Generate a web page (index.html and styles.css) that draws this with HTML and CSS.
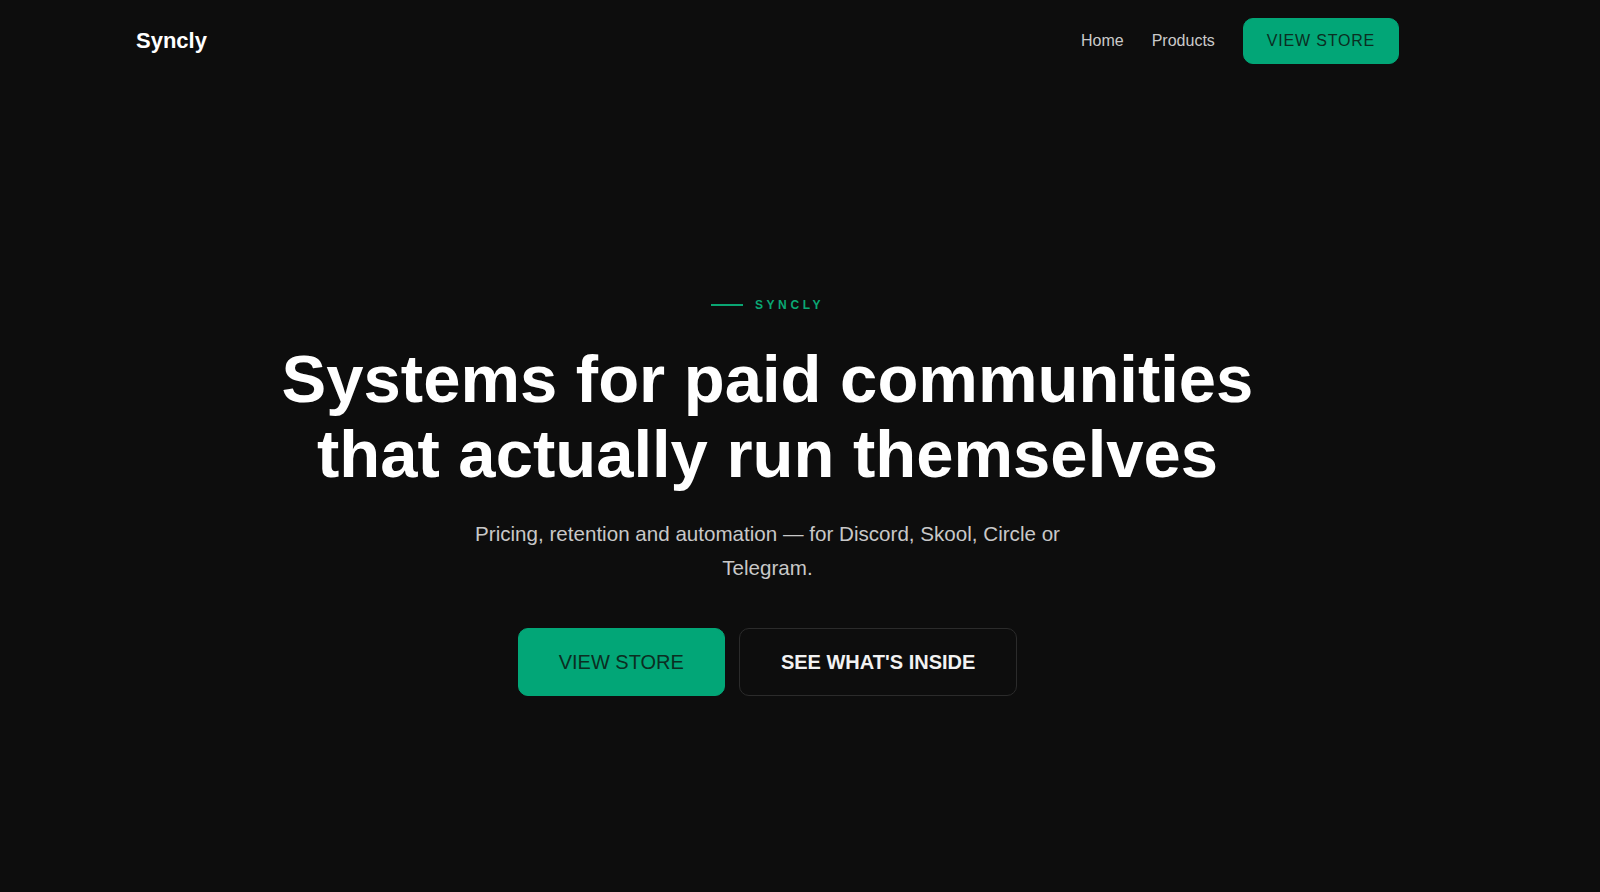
FILE: index.html
```html
<!DOCTYPE html>
<html lang="en">
<head>
  <meta charset="UTF-8">
  <meta name="viewport" content="width=device-width, initial-scale=1.0">
  <title>Syncly</title>
  <link rel="stylesheet" href="styles.css">
</head>
<body>

<div id="site">
  <header id="nav">
    <a class="logo" href="#">Syncly</a>
    <nav class="nav-links">
      <a href="#">Home</a>
      <a href="#">Products</a>
      <a class="btn btn-green btn-small" href="#">VIEW STORE</a>
    </nav>
  </header>

  <section id="hero">
    <div class="eyebrow">
      <span class="eyebrow-line"></span>
      <span class="eyebrow-text">SYNCLY</span>
    </div>
    <h1>Systems for paid communities<br>that actually run themselves</h1>
    <p class="subtitle">Pricing, retention and automation — for Discord, Skool, Circle or Telegram.</p>
    <div class="hero-actions">
      <a class="btn btn-green btn-large" href="#">VIEW STORE</a>
      <a class="btn btn-dark btn-large" href="#">SEE WHAT'S INSIDE</a>
    </div>
  </section>
</div>

</body>
</html>
```

FILE: styles.css
```css
body {
  margin: 0;
  font-family: "Liberation Sans", Arial, sans-serif;
  background-color: #0d0d0d;
  color: #fff;
}
a {
  text-decoration: none;
  color: inherit;
}
#site {
  max-width: 1535px;
  min-height: 892px;
}
#nav {
  display: flex;
  align-items: center;
  justify-content: space-between;
  height: 82px;
  padding: 0 136px;
}
.logo {
  font-size: 22px;
  font-weight: bold;
  color: #fff;
}
.nav-links {
  display: flex;
  align-items: center;
  gap: 28px;
}
.nav-links a {
  font-size: 16px;
  color: #cacaca;
}
.btn {
  display: inline-block;
  border-radius: 10px;
  border: 1px solid transparent;
}
.nav-links .btn-small {
  padding: 12px 23px;
  font-size: 16px;
  line-height: 20px;
  letter-spacing: 0.05em;
  color: #0b2e22;
}
.btn-green {
  background-color: #02a677;
  border-color: #02a677;
  color: #0b2e22;
}
.btn-dark {
  background-color: #0d0d0d;
  border-color: #2b2b2b;
  color: #f2f2f2;
  font-weight: bold;
}
.btn-large {
  padding: 21px 40px;
  font-size: 20px;
  line-height: 24px;
}
.btn-dark.btn-large {
  padding: 21px 41px;
}
#hero {
  display: flex;
  flex-direction: column;
  align-items: center;
  text-align: center;
  padding-top: 215px;
}
.eyebrow {
  display: flex;
  align-items: center;
  gap: 12px;
  height: 16px;
}
.eyebrow-line {
  width: 32px;
  height: 2px;
  background-color: #0aa572;
}
.eyebrow-text {
  font-size: 12px;
  font-weight: bold;
  letter-spacing: 0.3em;
  color: #0aa874;
}
h1 {
  margin: 28px 0 0;
  font-size: 67px;
  line-height: 75px;
  font-weight: bold;
  color: #fff;
}
.subtitle {
  margin: 26px 0 0;
  max-width: 610px;
  font-size: 20.6px;
  line-height: 34px;
  color: #c8c8c8;
}
.hero-actions {
  display: flex;
  gap: 14px;
  margin-top: 43px;
}
```
